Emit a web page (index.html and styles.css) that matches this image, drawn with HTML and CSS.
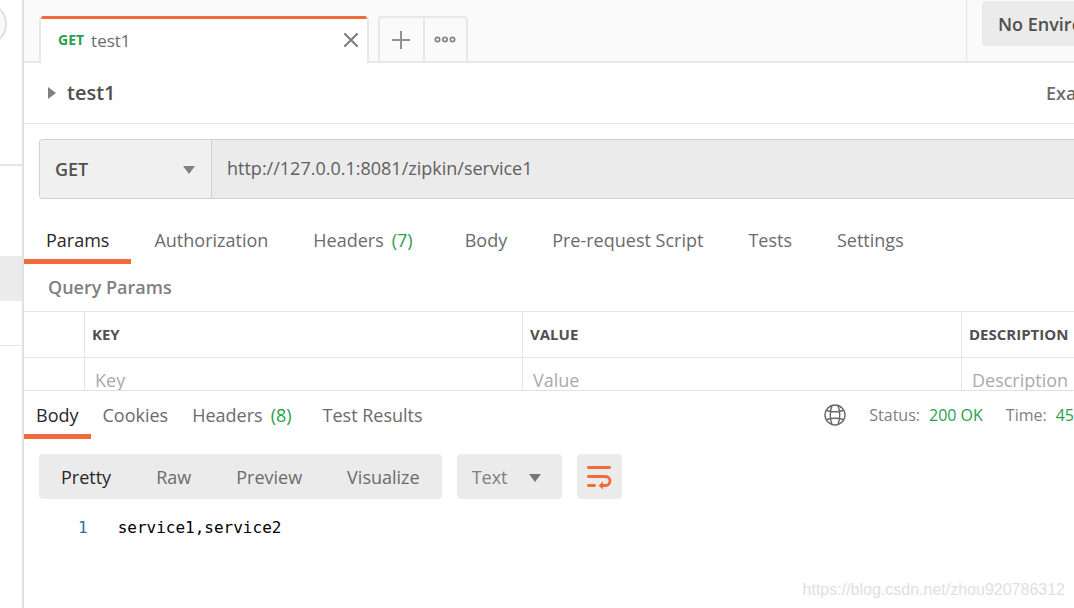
FILE: index.html
```html
<!DOCTYPE html>
<html lang="en">
<head>
<meta charset="utf-8">
<title>test1</title>
<link rel="stylesheet" href="styles.css">
</head>
<body>
<div class="app">
  <aside class="sidebar">
    <div class="side-head"><span class="side-circle"></span></div>
    <div class="side-gap"></div>
    <div class="side-selected"></div>
    <div class="side-row"></div>
  </aside>
  <main class="main">
    <header class="topbar">
      <div class="tabstrip">
        <div class="doc-tab">
          <span class="method">GET</span>
          <span class="doc-name">test1</span>
          <button class="icon-button close" type="button" aria-label="Close tab">
            <svg width="16" height="16" viewBox="0 0 16 16"><path d="M2 2L14 14M14 2L2 14" stroke="#808080" stroke-width="2.200" stroke-linecap="round"/></svg>
          </button>
        </div>
        <div class="tab-actions">
          <button class="tab-action" type="button" aria-label="New tab">
            <svg width="18" height="18" viewBox="0 0 18 18"><path d="M9 0V18M0 9H18" stroke="#909090" stroke-width="2"/></svg>
          </button>
          <button class="tab-action" type="button" aria-label="More">
            <svg width="22" height="8" viewBox="0 0 22 8" fill="none" stroke="#858585" stroke-width="1.7"><circle cx="3.5" cy="3.500" r="2.2"/><circle cx="11" cy="3.500" r="2.2"/><circle cx="18.5" cy="3.500" r="2.2"/></svg>
          </button>
        </div>
      </div>
      <div class="environment"><button class="env-button" type="button">No Environment</button></div>
    </header>

    <div class="title-row">
      <button class="icon-button" type="button" aria-label="Expand">
        <svg width="8" height="12" viewBox="0 0 8 12"><path d="M0 0L8 6L0 12Z" fill="#808080"/></svg>
      </button>
      <h1 class="title">test1</h1>
      <div class="examples"><a href="#examples">Examples</a></div>
    </div>

    <div class="url-bar">
      <div class="select-wrap method-wrap">
        <select class="method-select" aria-label="Method"><option>GET</option></select>
        <svg class="caret" width="12" height="8" viewBox="0 0 12 8"><path d="M0 0H12L6 8Z" fill="#808080"/></svg>
      </div>
      <input class="url" type="text" aria-label="Request URL" value="http://127.0.0.1:8081/zipkin/service1">
    </div>

    <nav class="request-tabs">
      <button class="tab active" type="button">Params</button>
      <button class="tab" type="button">Authorization</button>
      <button class="tab" type="button">Headers<span class="count">(7)</span></button>
      <button class="tab" type="button">Body</button>
      <button class="tab" type="button">Pre-request Script</button>
      <button class="tab" type="button">Tests</button>
      <button class="tab" type="button">Settings</button>
    </nav>

    <section class="params">
      <h2 class="section-title">Query Params</h2>
      <table class="param-table">
        <thead><tr><th class="check-col"></th><th class="key-col">KEY</th><th class="value-col">VALUE</th><th>DESCRIPTION</th></tr></thead>
        <tbody><tr>
          <td></td>
          <td><input type="text" placeholder="Key" aria-label="Key"></td>
          <td><input type="text" placeholder="Value" aria-label="Value"></td>
          <td><input type="text" placeholder="Description" aria-label="Description"></td>
        </tr></tbody>
      </table>
    </section>

    <section class="response">
      <div class="response-head">
        <nav class="response-tabs">
          <button class="tab active" type="button">Body</button>
          <button class="tab" type="button">Cookies</button>
          <button class="tab" type="button">Headers<span class="count">(8)</span></button>
          <button class="tab" type="button">Test Results</button>
        </nav>
        <div class="status">
          <svg width="22" height="22" viewBox="0 0 22 22" fill="none" stroke="#666" stroke-width="1.4"><circle cx="11" cy="11" r="10"/><path d="M8 1.5Q4.500 11 8 20.500M14 1.500Q17.500 11 14 20.500M2.500 6.500Q11 9 19.500 6.500M2.500 15.500Q11 13 19.500 15.500"/></svg>
          <span>Status:<b class="good">200 OK</b></span>
          <span>Time:<b class="good">45</b></span>
        </div>
      </div>
      <div class="toolbar">
        <div class="views">
          <button class="view active" type="button">Pretty</button>
          <button class="view" type="button">Raw</button>
          <button class="view" type="button">Preview</button>
          <button class="view" type="button">Visualize</button>
        </div>
        <div class="select-wrap">
          <select class="format" aria-label="Format"><option>Text</option></select>
          <svg class="caret" width="12" height="8" viewBox="0 0 12 8"><path d="M0 0H12L6 8Z" fill="#777"/></svg>
        </div>
        <button class="wrap-button" type="button" aria-label="Wrap lines">
          <svg width="26" height="26" viewBox="0 0 26 26" fill="none" stroke="#f26b3a" stroke-width="2.800" stroke-linecap="round"><path d="M2.400 3.500H23.600M2.400 12.500H19.500A4.500 4.500 0 0 1 19.500 21.500H17M2.400 21.500H8.500"/><path d="M17 17.500V25.500L12.500 21.500Z" fill="#f26b3a" stroke="none"/></svg>
        </button>
      </div>
      <div class="code"><span class="line-number">1</span><code>service1,service2</code></div>
    </section>
  </main>
</div>
<div class="watermark">https://blog.csdn.net/zhou920786312</div>
</body>
</html>
```
FILE: styles.css
```css
* { box-sizing: border-box; }

body {
  margin: 0;
  overflow: hidden;
  background: #fff;
  color: #6b6b6b;
  font: 18px/24px "Open Sans", sans-serif;
}

button, input, select {
  margin: 0;
  padding: 0;
  border: 0;
  background: none;
  color: inherit;
  font: inherit;
}

svg { display: block; }
a { color: inherit; text-decoration: none; }
.app { display: flex; min-height: 100vh; }

.sidebar {
  flex: 0 0 24px;
  overflow: hidden;
  border-right: 2px solid #e0e0e0;
}
.side-head { position: relative; height: 166px; border-bottom: 2px solid #e6e6e6; }
.side-circle {
  position: absolute;
  top: 2px;
  left: -37px;
  width: 44px;
  height: 44px;
  border: 2px solid #e0e0e0;
  border-radius: 50%;
  background: #fafafa;
}
.side-gap { height: 90px; }
.side-selected { height: 45px; background: #ebebeb; }
.side-row { height: 45px; border-bottom: 1px solid #e6e6e6; }

.main { flex: 1; min-width: 0; }

.topbar {
  display: flex;
  height: 63px;
  background: linear-gradient(#e8e8e8, #e8e8e8) bottom / 100% 2px no-repeat #fafafa;
}
.tabstrip { display: flex; flex: 1; gap: 9px; padding: 16px 0 0 15px; }
.doc-tab {
  display: flex;
  align-items: center;
  gap: 7px;
  width: 330px;
  padding: 0 8px 0 17px;
  border: solid #e8e8e8;
  border-width: 0 2px;
  border-radius: 4px 4px 0 0;
  background: linear-gradient(#f26b3a, #f26b3a) top / 100% 3px no-repeat border-box #fff;
}
.method { color: #29a04b; font-size: 14px; font-weight: 700; }
.doc-name { font-size: 17px; padding-top: 2px; }
.icon-button { display: flex; }
.close { margin-left: auto; }
.tab-actions {
  display: flex;
  border: 2px solid #e8e8e8;
  border-radius: 4px 4px 0 0;
}
.tab-action { display: flex; align-items: center; justify-content: center; width: 43px; padding-right: 1px; }
.tab-action + .tab-action { border-left: 2px solid #e8e8e8; }
.environment {
  flex: 0 0 108px;
  overflow: hidden;
  margin-bottom: 2px;
  padding: 1px 0 0 15px;
  border-left: 1px solid #e6e6e6;
}
.env-button {
  height: 45px;
  padding: 0 16px;
  border-radius: 4px;
  background: #ebebeb;
  color: #505050;
  font-weight: 600;
  white-space: nowrap;
}

.title-row {
  display: flex;
  align-items: center;
  height: 61px;
  padding-left: 24px;
  border-bottom: 1px solid #e6e6e6;
}
.title { margin: 0 0 0 11px; color: #505050; font-size: 20px; font-weight: 600; }
.examples { width: 28px; margin-left: auto; overflow: hidden; font-weight: 600; }

.url-bar {
  display: flex;
  height: 60px;
  margin: 15px 0 0 15px;
  overflow: hidden;
  border: 1px solid #d0d0d0;
  border-right: 0;
  border-radius: 4px 0 0 4px;
}
.select-wrap { position: relative; }
.select-wrap select { appearance: none; width: 100%; height: 100%; padding: 0 15px; }
.caret { position: absolute; top: calc(50% - 3px); right: 16px; pointer-events: none; }
.method-wrap { width: 172px; border-right: 1px solid #d0d0d0; background: #f0f0f0; }
.method-select { color: #505050; font-weight: 600; }
.url { flex: 1; min-width: 0; padding: 0 15px 2px; background: #ebebeb; color: #606060; }

.tab { color: #6b6b6b; white-space: nowrap; }
.tab.active { color: #282828; box-shadow: inset 0 -5px #f26b3a; }
.count { margin: 0 7px 0 8px; color: #29a04b; }
.request-tabs { display: flex; gap: 1px; height: 48px; margin-top: 17px; }
.request-tabs .tab { padding: 0 22px; }

.params { height: 127px; overflow: hidden; border-bottom: 1px solid #e0e0e0; }
.section-title { margin: 0; padding: 11px 24px 12px; color: #808080; font-size: 18px; font-weight: 600; }
.param-table { width: 100%; table-layout: fixed; border-collapse: separate; border-spacing: 0; }
.param-table th, .param-table td { height: 46px; padding: 0 7px 2px; border: solid #e6e6e6; border-width: 1px 0 0 1px; }
.param-table tr > :first-child { border-left: 0; }
.param-table th { color: #505050; font-size: 15px; font-weight: 700; text-align: left; }
.param-table td { padding: 0 0 2px 10px; }
.param-table input { width: 100%; color: #505050; }
.param-table input::placeholder { color: #aaa; opacity: 1; }
.check-col { width: 60px; }
.key-col { width: 438px; }
.value-col { width: 439px; }

.response-head { display: flex; justify-content: space-between; height: 48px; }
.response-tabs { display: flex; }
.response-tabs .tab { padding: 0 12px; }
.status { display: flex; align-items: center; gap: 23px; font-size: 16px; color: #808080; white-space: nowrap; }
.good { margin-left: 9px; color: #29a04b; font-weight: 400; }
.toolbar { display: flex; gap: 15px; height: 45px; margin: 15px 0 0 15px; }
.views { display: flex; gap: 1px; border-radius: 4px; background: #ebebeb; }
.view { padding: 0 22px; color: #6b6b6b; }
.view.active { color: #282828; }
.format { border-radius: 4px; background: #ebebeb; color: #808080; }
.toolbar .select-wrap { width: 105px; }
.toolbar .caret { right: 21px; }
.wrap-button { display: flex; align-items: center; justify-content: center; width: 45px; border-radius: 4px; background: #ebebeb; }
.code {
  display: flex;
  gap: 30px;
  padding: 17px 0 0 54px;
  color: #000;
  font: 16px/24px "DejaVu Sans Mono", monospace;
}
.code code { font: inherit; }
.line-number { color: #237893; }

.watermark {
  position: absolute;
  right: 9px;
  bottom: 6px;
  color: #e0e0e0;
  font: 16px/24px "Liberation Sans", sans-serif;
}
```
